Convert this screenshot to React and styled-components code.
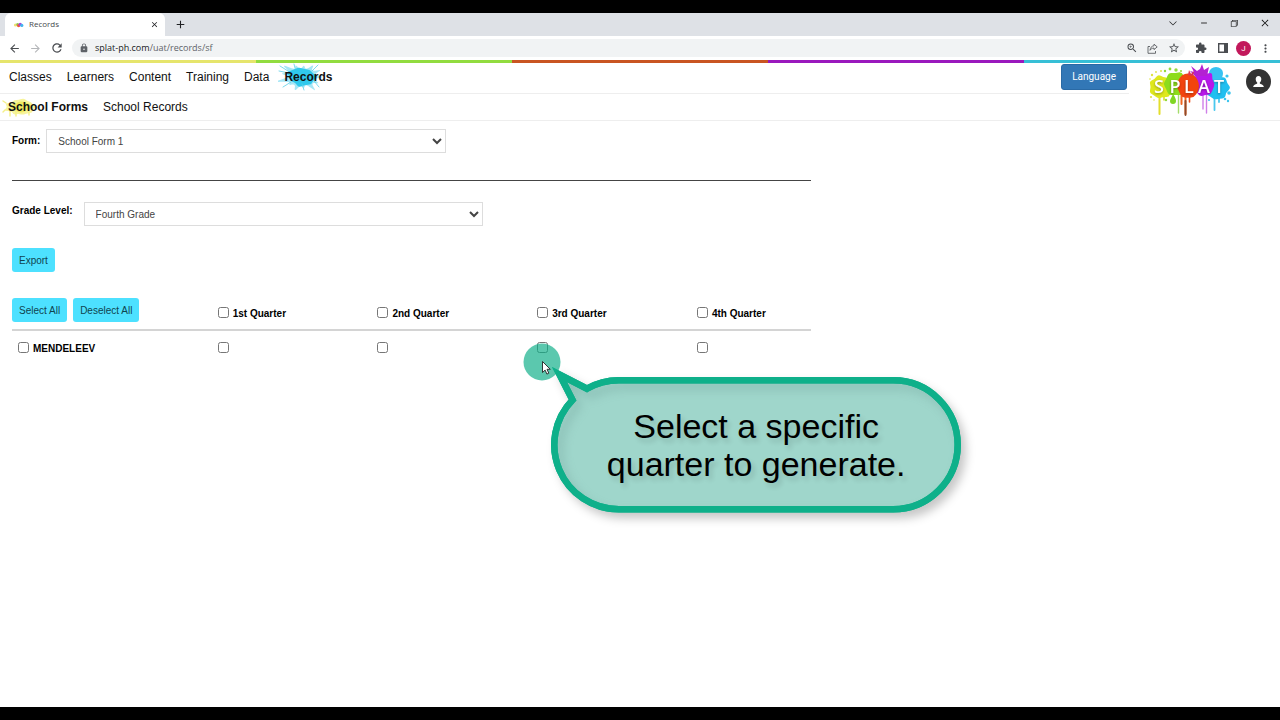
import styled, { createGlobalStyle } from 'styled-components';
import { useState } from 'react';
import {
	MdAdd,
	MdArrowBack,
	MdArrowForward,
	MdClose,
	MdLock,
	MdMoreVert,
	MdRefresh,
	MdRemove,
	MdStarBorder,
	MdZoomIn,
} from 'react-icons/md';
import { VscChevronDown, VscChromeClose, VscChromeRestore } from 'react-icons/vsc';

const GlobalStyle = createGlobalStyle`
	*, *::before, *::after {
		box-sizing: border-box;
	}
	body {
		margin: 0;
		background: #000000;
		color: #000000;
		font-family: 'Liberation Sans', Arial, sans-serif;
		font-size: 10px;
		line-height: 14px;
	}
	button, select, input {
		font: inherit;
		margin: 0;
	}
`;

const Screen = styled.div`
	display: flex;
	flex-direction: column;
	min-height: 100vh;
	border-top: 13px solid #000000;
	border-bottom: 13px solid #000000;
	background: #ffffff;
`;

/* browser window */

const TabStrip = styled.div`
	display: flex;
	align-items: stretch;
	height: 23px;
	padding-left: 5px;
	background: #dee1e6;
`;

const Tab = styled.div`
	display: flex;
	align-items: center;
	width: 160px;
	padding: 0 5px 0 8px;
	border-radius: 6px 6px 0 0;
	background: #ffffff;
	color: #45494d;
	font-family: 'Open Sans', sans-serif;
	font-size: 8px;
`;

const TabTitle = styled.span`
	flex: 1;
	padding: 0 0 2px 5px;
`;

const ChromeButton = styled.button`
	display: flex;
	align-items: center;
	justify-content: center;
	width: ${(props) => props.$width || 21}px;
	padding: 0;
	border: 0;
	background: none;
	color: ${(props) => props.$color || '#4a4d51'};
`;

const WindowControls = styled.div`
	display: flex;
	margin-left: auto;
	padding-bottom: 4px;
`;

const Toolbar = styled.div`
	display: flex;
	align-items: center;
	height: 24px;
	padding: 0 4px;
	background: #ffffff;
`;

const AddressBar = styled.div`
	display: flex;
	align-items: center;
	flex: 1;
	height: 18px;
	margin: 0 5px;
	padding: 0 1px 0 7px;
	border-radius: 9px;
	background: #f1f3f4;
	color: #5f6368;
	font-family: 'Open Sans', sans-serif;
	font-size: 9px;
`;

const Address = styled.span`
	flex: 1;
	padding-left: 6px;

	b {
		color: #202124;
		font-weight: 400;
	}
`;

const Profile = styled.button`
	width: 15px;
	height: 15px;
	margin: 0 3px;
	padding: 0;
	border: 0;
	border-radius: 50%;
	background: #c2185b;
	color: #ffffff;
	font-family: Roboto, sans-serif;
	font-size: 8px;
	line-height: 15px;
`;

/* site header */

const Stripes = styled.div`
	display: flex;
	height: 3px;
`;

const Stripe = styled.div`
	flex: 1;
	background: ${(props) => props.$color};
`;

const Header = styled.header`
	display: flex;
	align-items: flex-start;
	height: 58px;
	border-bottom: 1px solid #eeeeee;
`;

const Menus = styled.div`
	flex: 1;
`;

const MenuRow = styled.div`
	display: flex;
	align-items: flex-start;
	justify-content: space-between;
	height: ${(props) => props.$height}px;
	padding: ${(props) => props.$pad};
	border-bottom: ${(props) => (props.$line ? '1px solid #eeeeee' : '0')};
`;

const Menu = styled.nav`
	display: flex;
	gap: 15px;
	padding-top: 6px;
`;

const MenuLink = styled.a`
	position: relative;
	color: #111111;
	font-size: 12px;
	font-weight: ${(props) => (props.$active ? 700 : 400)};
	text-decoration: none;
`;

const MenuText = styled.span`
	position: relative;
`;

const Splash = styled.svg`
	position: absolute;
	top: 50%;
	left: -6px;
	transform: translateY(-50%);
`;

const LanguageButton = styled.button`
	height: 26px;
	margin-right: 2px;
	padding: 0 10px;
	border: 1px solid #2a6aa5;
	border-radius: 3px;
	background: #3277b6;
	color: #ffffff;
	font-family: Roboto, sans-serif;
`;

const LogoLink = styled.a`
	display: block;
	height: 56px;
	margin-left: 19px;
`;

const Account = styled.button`
	display: flex;
	align-items: center;
	justify-content: center;
	width: 25px;
	height: 25px;
	margin: 6px 9px 0 14px;
	padding: 0;
	border: 0;
	border-radius: 50%;
	background: #333333;
`;

/* page */

const Content = styled.main`
	width: 62.4%;
	margin-left: 12px;
	padding-top: 8px;
`;

const Field = styled.div`
	display: flex;
	align-items: ${(props) => props.$align || 'center'};
	gap: ${(props) => props.$gap}px;
`;

const FieldLabel = styled.label`
	padding: 2px 0;
	font-weight: 700;
`;

const Select = styled.select`
	width: 50%;
	height: 24px;
	padding: 0 7px;
	border: 1px solid #dddddd;
	border-radius: 0;
	background: #ffffff;
	color: #444444;
`;

const Divider = styled.hr`
	height: 1px;
	margin: 27px 0 21px;
	border: 0;
	background: #444444;
`;

const ActionButton = styled.button`
	height: 24px;
	padding: 2px 7px 0;
	border: 0;
	border-radius: 3px;
	background: #4de1ff;
	color: #10444f;
	font-weight: 400;
`;

const Actions = styled.div`
	display: flex;
	gap: 6px;
	padding: ${(props) => props.$pad || '0'};
`;

const Table = styled.table`
	width: 100%;
	table-layout: fixed;
	border-collapse: collapse;
	text-align: left;
`;

const HeadCell = styled.th`
	width: ${(props) => props.$width};
	padding: ${(props) => props.$pad || '9px 6px 8px'};
	border-bottom: 2px solid #d4d4d4;
	vertical-align: top;
`;

const Cell = styled.td`
	padding: 11px 6px;
	vertical-align: top;
`;

const CheckLabel = styled.label`
	display: flex;
	align-items: flex-start;
	gap: 4px;
	font-weight: 700;
`;

const Checkbox = styled.input`
	flex: none;
	width: 11px;
	height: 11px;
`;

const Target = styled.div`
	position: relative;
	display: flex;
`;

const ClickSpot = styled.svg`
	position: absolute;
	top: 0;
	left: -14px;
	pointer-events: none;
`;

const Callout = styled.div`
	position: absolute;
	top: 35px;
	left: 14px;
	z-index: 1;
	display: flex;
	align-items: center;
	justify-content: center;
	width: 410px;
	height: 136px;
	font-size: 34px;
	line-height: 38px;
	text-align: center;
	text-shadow: 3px 4px 5px rgba(0, 0, 0, 0.14);
	white-space: nowrap;
	pointer-events: none;
`;

const Bubble = styled.svg`
	position: absolute;
	top: -15px;
	left: -10px;
	z-index: -1;
`;

const QUARTERS = ['1st Quarter', '2nd Quarter', '3rd Quarter', '4th Quarter'];
const WIDTHS = ['20%', '20%', '20%', '15%'];
const STRIPES = ['#e6e56c', '#92dc3f', '#c95522', '#9a18bd', '#37bfd6'];

// Closed blob whose outline runs through a ring of points at the given radii
function blob(cx, cy, radii, stretch = 1) {
	const points = radii.map((r, i) => {
		const angle = (i / radii.length) * Math.PI * 2;
		return [cx + Math.cos(angle) * r * stretch, cy + Math.sin(angle) * r];
	});
	const mid = (a, b) => `${((a[0] + b[0]) / 2).toFixed(1)} ${((a[1] + b[1]) / 2).toFixed(1)}`;
	const last = points[points.length - 1];
	return points.reduce(
		(path, p, i) =>
			`${path}Q${p[0].toFixed(1)} ${p[1].toFixed(1)} ${mid(p, points[(i + 1) % points.length])}`,
		`M${mid(last, points[0])}`,
	);
}

function CyanSplash() {
	const spikes = [17, 8, 15, 8, 19, 7, 12, 8, 16, 8, 13, 9, 23, 8, 17, 9, 20, 8, 14, 7, 13, 7, 16, 8, 17, 8];
	return (
		<Splash width='50' height='30' viewBox='0 0 50 30' aria-hidden='true'>
			<g style={{ filter: 'blur(0.5px)' }}>
				<path d={blob(24, 15, spikes, 1.4)} fill='#7fdcf2' opacity='0.7' />
				<path d={blob(24, 15, [11, 8, 10, 8, 11, 7, 9, 8, 12, 9, 10, 8, 9, 8], 1.5)} fill='#30c9ec' />
				<path
					d='M10 9L2 4M11 11L1 9M13 20L5 25M34 9l6-6M36 19l5 6M24 22l2 6M17 6l-1-4'
					stroke='#5bd0ea'
					strokeWidth='0.8'
					strokeLinecap='round'
				/>
			</g>
		</Splash>
	);
}

function YellowSplash() {
	return (
		<Splash width='44' height='22' viewBox='0 0 44 22' aria-hidden='true'>
			<g style={{ filter: 'blur(0.6px)' }}>
				<path d={blob(19, 11, [9, 7, 9, 7, 8, 7, 9, 7, 11, 8, 10, 7, 8, 7, 9, 7, 8, 7], 1.7)} fill='#f7f49c' />
				<path d={blob(19, 11, [7, 5, 6, 5, 7, 5, 6, 6], 1.7)} fill='#efea62' />
				<path d='M8 14v6M14 15v5M27 15v4M4 7L1 5M3 14L1 16' stroke='#f4f088' strokeWidth='1.4' strokeLinecap='round' />
			</g>
		</Splash>
	);
}

function Logo() {
	return (
		<svg width='84' height='56' viewBox='0 0 84 56' role='img' aria-label='Splat'>
			<g strokeLinecap='round' fill='none'>
				<path d='M11.5 26V51' stroke='#e3de2c' strokeWidth='2' />
				<path d='M16 28V37' stroke='#d8e02a' strokeWidth='1.6' />
				<path d='M30.5 26V50' stroke='#a4dc6a' strokeWidth='1.4' />
				<path d='M33.5 26V41M37.5 26V51' stroke='#f0641e' strokeWidth='2' />
				<path d='M37.5 38V52' stroke='#8d4a2b' strokeWidth='1.8' />
				<path d='M41.5 28V39' stroke='#ee4b12' strokeWidth='1.6' />
				<path d='M55 26V46M58.5 26V50' stroke='#cf7fe8' strokeWidth='1.4' />
				<path d='M66.5 28V47M71 28V39' stroke='#49c8ee' strokeWidth='1.8' />
			</g>
			<path d={blob(13, 24, [12, 11, 13, 10, 12, 11, 13, 10, 13, 10, 13, 10, 12, 10], 1)} fill='#dfe81d' />
			<path d={blob(27, 21, [13, 11, 13, 11, 13, 10, 12, 10, 13, 11, 14, 11], 1)} fill='#8ddc1c' />
			<path d={blob(69, 25, [14, 10, 13, 11, 12, 11, 13, 11, 13, 10, 12, 11, 14, 11], 1)} fill='#20bff0' />
			<path d='M61 10a7 6 0 0 1 14 0c0 4-2 5-2 9H63c0-4-2-5-2-9z' fill='#37c2f2' />
			<path d={blob(55, 21, [12, 11, 13, 11, 13, 10, 12, 11, 14, 10, 16, 10, 15, 10], 1)} fill='#b818ea' />
			<path d={blob(40, 23, [12, 12, 13, 12, 13, 11, 12, 12, 13, 13, 13, 12], 0.95)} fill='#f2440f' />
			<path d='M47 13l-5-5 4 1-3-6 6 5 3-2 2-5 2 6 5-3-2 9z' fill='#b321d2' />
			<path d='M40 12l1-5 2 4 3-3-1 5z' fill='#dd3450' />
			<path d='M25 31c2 3 3 5 3 7a3 3 0 0 1-6 0c0-2 2-4 3-7z' fill='#7fd622' />
			<g fill='#dfe342'>
				<circle cx='4' cy='12' r='1.2' />
				<circle cx='8' cy='9' r='0.9' />
				<circle cx='2' cy='16' r='0.8' />
				<circle cx='13' cy='8' r='1' />
				<circle cx='3' cy='34' r='1.1' />
				<circle cx='6' cy='37' r='0.8' />
			</g>
			<g fill='#93d93b'>
				<circle cx='17' cy='8' r='1.2' />
				<circle cx='22' cy='6' r='1.4' />
				<circle cx='28' cy='7' r='1.7' />
				<circle cx='33' cy='8' r='1' />
				<circle cx='18' cy='37' r='1.2' />
			</g>
			<g fill='#3cc5ee'>
				<circle cx='79' cy='13' r='1.6' />
				<circle cx='81' cy='30' r='1.8' />
				<circle cx='77' cy='36' r='1.3' />
				<circle cx='80' cy='38' r='1.2' />
				<circle cx='61' cy='37' r='1.1' />
			</g>
			<text
				x='11 27 41 56 71'
				y='30'
				fill='#ffffff'
				fontFamily="'Open Sans', sans-serif"
				fontSize='18'
				fontWeight='600'
				textAnchor='middle'
				style={{ filter: 'drop-shadow(0 1px 1px rgba(0, 0, 0, 0.35))' }}
			>
				SPLAT
			</text>
		</svg>
	);
}

function Favicon() {
	return (
		<svg width='11' height='8' viewBox='0 0 11 8' aria-hidden='true'>
			<circle cx='2.5' cy='4' r='1.6' fill='#f0e070' />
			<circle cx='4.6' cy='3.4' r='1.4' fill='#8ecf5a' />
			<circle cx='5.6' cy='4.6' r='1.7' fill='#ee5a3c' />
			<circle cx='7.2' cy='3.4' r='1.7' fill='#a345dc' />
			<circle cx='8.8' cy='4.4' r='1.6' fill='#44b4ee' />
		</svg>
	);
}

function ShareIcon() {
	return (
		<svg width='11' height='11' viewBox='0 0 11 11' fill='none' stroke='currentColor' aria-hidden='true'>
			<path d='M3 3.5H1v6.800h7.500V8' strokeWidth='0.8' />
			<path d='M7 1.2l3.2 2.7L7 6.6V5.1C5 5.1 3.9 5.9 3 7.3c.2-2.4 1.4-4.2 4-4.6z' strokeLinejoin='round' strokeWidth='0.8' />
		</svg>
	);
}

function ExtensionIcon() {
	return (
		<svg width='12' height='12' viewBox='0 0 24 24' fill='currentColor' aria-hidden='true'>
			<path d='M20.5 11H19V7c0-1.1-.9-2-2-2h-4V3.5a2.5 2.5 0 0 0-5 0V5H4c-1.1 0-2 .9-2 2v3.800h1.500a2.700 2.700 0 0 1 0 5.400H2V20c0 1.100.9 2 2 2h3.800v-1.500a2.700 2.700 0 0 1 5.400 0V22H17c1.100 0 2-.9 2-2v-4h1.500a2.500 2.500 0 0 0 0-5z' />
		</svg>
	);
}

function SidePanelIcon() {
	return (
		<svg width='10' height='10' viewBox='0 0 10 10' aria-hidden='true'>
			<path d='M0 0h10v10H0zM1.4 1.4v7.2H6V1.4z' fill='currentColor' fillRule='evenodd' />
		</svg>
	);
}

function Hint() {
	return (
		<>
			<ClickSpot width='38' height='40' viewBox='0 0 38 40' aria-hidden='true'>
				<circle cx='19' cy='20' r='18.5' fill='#0eae88' fillOpacity='0.68' />
				<path
					d='M19.5 19.5v11l2.6-2.4 1.8 4 1.9-.9-1.8-3.9h3.3z'
					fill='#ffffff'
					stroke='#222222'
					strokeWidth='0.9'
				/>
			</ClickSpot>
			<Callout role='note'>
				<Bubble width='440' height='170' viewBox='0 0 440 170' aria-hidden='true'>
					<defs>
						<path
							id='bubble'
							d='M46 26.7A64.5 64.5 0 0 1 77.8 18.3H352.2A64.5 64.5 0 0 1 352.2 147.3H77.8A64.5 64.5 0 0 1 31.5 37.9L18.5 12.5z'
						/>
						<clipPath id='inside'>
							<use href='#bubble' />
						</clipPath>
					</defs>
					<g style={{ filter: 'drop-shadow(5px 6px 5px rgba(0, 0, 0, 0.22))' }}>
						<use href='#bubble' fill='#9fd6cb' stroke='#0eb08a' strokeWidth='6.5' strokeMiterlimit='8' />
					</g>
					<g clipPath='url(#inside)'>
						<use
							href='#bubble'
							x='5'
							y='6'
							fill='none'
							stroke='#5f8f88'
							strokeOpacity='0.3'
							strokeWidth='7'
							style={{ filter: 'blur(5px)' }}
						/>
					</g>
					<use href='#bubble' fill='none' stroke='#0eb08a' strokeWidth='6.5' strokeMiterlimit='8' />
				</Bubble>
				<span>
					Select a specific
					<br />
					quarter to generate.
				</span>
			</Callout>
		</>
	);
}

function Browser() {
	return (
		<>
			<TabStrip>
				<Tab>
					<Favicon />
					<TabTitle>Records</TabTitle>
					<ChromeButton $width={11} $color='#202124' aria-label='Close tab'>
						<MdClose size={9} />
					</ChromeButton>
				</Tab>
				<ChromeButton $width={30} $color='#202124' aria-label='New tab'>
					<MdAdd size={13} />
				</ChromeButton>
				<WindowControls>
					<ChromeButton $width={30} $color='#202124' aria-label='Search tabs'>
						<VscChevronDown size={12} />
					</ChromeButton>
					<ChromeButton $width={31} $color='#111111' aria-label='Minimize'>
						<MdRemove size={10} />
					</ChromeButton>
					<ChromeButton $width={30} $color='#111111' aria-label='Restore'>
						<VscChromeRestore size={10} />
					</ChromeButton>
					<ChromeButton $width={31} $color='#111111' aria-label='Close'>
						<VscChromeClose size={10} />
					</ChromeButton>
				</WindowControls>
			</TabStrip>
			<Toolbar>
				<ChromeButton aria-label='Back'>
					<MdArrowBack size={13} />
				</ChromeButton>
				<ChromeButton $color='#b4b6b9' aria-label='Forward'>
					<MdArrowForward size={13} />
				</ChromeButton>
				<ChromeButton aria-label='Reload'>
					<MdRefresh size={14} />
				</ChromeButton>
				<AddressBar>
					<MdLock size={10} />
					<Address>
						<b>splat-ph.com</b>/uat/records/sf
					</Address>
					<ChromeButton aria-label='Zoom'>
						<MdZoomIn size={12} />
					</ChromeButton>
					<ChromeButton aria-label='Share'>
						<ShareIcon />
					</ChromeButton>
					<ChromeButton aria-label='Bookmark'>
						<MdStarBorder size={12} />
					</ChromeButton>
				</AddressBar>
				<ChromeButton $width={22} aria-label='Extensions'>
					<ExtensionIcon />
				</ChromeButton>
				<ChromeButton aria-label='Side panel'>
					<SidePanelIcon />
				</ChromeButton>
				<Profile>J</Profile>
				<ChromeButton $width={22} aria-label='More'>
					<MdMoreVert size={13} />
				</ChromeButton>
			</Toolbar>
		</>
	);
}

function SiteHeader() {
	return (
		<>
			<Stripes>
				{STRIPES.map((color) => (
					<Stripe key={color} $color={color} />
				))}
			</Stripes>
			<Header>
				<Menus>
					<MenuRow $height={31} $pad='1px 0 0 9px' $line>
						<Menu>
							<MenuLink href='#classes'>Classes</MenuLink>
							<MenuLink href='#learners'>Learners</MenuLink>
							<MenuLink href='#content'>Content</MenuLink>
							<MenuLink href='#training'>Training</MenuLink>
							<MenuLink href='#data'>Data</MenuLink>
							<MenuLink href='#records' $active>
								<CyanSplash />
								<MenuText>Records</MenuText>
							</MenuLink>
						</Menu>
						<LanguageButton>Language</LanguageButton>
					</MenuRow>
					<MenuRow $height={26} $pad='0 0 0 8px'>
						<Menu>
							<MenuLink href='#forms' $active>
								<YellowSplash />
								<MenuText>School Forms</MenuText>
							</MenuLink>
							<MenuLink href='#school-records'>School Records</MenuLink>
						</Menu>
					</MenuRow>
				</Menus>
				<LogoLink href='#home'>
					<Logo />
				</LogoLink>
				<Account aria-label='Account'>
					<svg width='13' height='13' viewBox='0 0 13 13' fill='#ffffff' aria-hidden='true'>
						<path d='M6.5 1C8.3 1 9.4 2.3 9.3 4.2 9.2 5.7 8.6 6.9 7.8 7.5V8.6C8.6 9.2 11.5 9.5 11.8 12H1.2C1.5 9.5 4.4 9.2 5.2 8.6V7.5C4.4 6.9 3.8 5.7 3.7 4.2 3.6 2.3 4.7 1 6.5 1z' />
					</svg>
				</Account>
			</Header>
		</>
	);
}

function App() {
	const [student, setStudent] = useState(false);
	const [checked, setChecked] = useState({});

	const toggle = (quarter) => setChecked({ ...checked, [quarter]: !checked[quarter] });

	const setAll = (value) => {
		setStudent(value);
		setChecked(Object.fromEntries(QUARTERS.map((quarter) => [quarter, value])));
	};

	return (
		<Screen>
			<GlobalStyle />
			<Browser />
			<SiteHeader />
			<Content>
				<Field $gap={6}>
					<FieldLabel htmlFor='form'>Form:</FieldLabel>
					<Select id='form'>
						<option>School Form 1</option>
					</Select>
				</Field>
				<Divider />
				<Field $gap={11} $align='flex-start'>
					<FieldLabel htmlFor='grade'>Grade Level:</FieldLabel>
					<Select id='grade'>
						<option>Fourth Grade</option>
					</Select>
				</Field>
				<Actions $pad='22px 0 26px'>
					<ActionButton>Export</ActionButton>
				</Actions>
				<Table>
					<thead>
						<tr>
							<HeadCell $width='25%' $pad='0'>
								<Actions>
									<ActionButton onClick={() => setAll(true)}>Select All</ActionButton>
									<ActionButton onClick={() => setAll(false)}>Deselect All</ActionButton>
								</Actions>
							</HeadCell>
							{QUARTERS.map((quarter, i) => (
								<HeadCell key={quarter} $width={WIDTHS[i]}>
									<CheckLabel>
										<Checkbox
											type='checkbox'
											checked={!!checked[quarter]}
											onChange={() => toggle(quarter)}
										/>
										{quarter}
									</CheckLabel>
								</HeadCell>
							))}
						</tr>
					</thead>
					<tbody>
						<tr>
							<Cell>
								<CheckLabel>
									<Checkbox
										type='checkbox'
										checked={student}
										onChange={() => setStudent(!student)}
									/>
									MENDELEEV
								</CheckLabel>
							</Cell>
							{QUARTERS.map((quarter) => (
								<Cell key={quarter}>
									<Target>
										<Checkbox
											type='checkbox'
											aria-label={`MENDELEEV ${quarter}`}
											checked={!!checked[quarter]}
											onChange={() => toggle(quarter)}
										/>
										{quarter === '3rd Quarter' && <Hint />}
									</Target>
								</Cell>
							))}
						</tr>
					</tbody>
				</Table>
			</Content>
		</Screen>
	);
}

export default App;
